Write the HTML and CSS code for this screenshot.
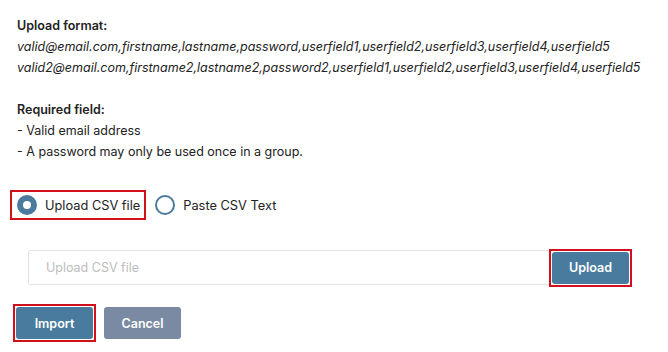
FILE: index.html
```html
<!DOCTYPE html>
<html lang="en">
<head>
    <meta charset="UTF-8">
    <meta name="viewport" content="width=device-width, initial-scale=1.0">
    <title>Import users</title>
    <link rel="stylesheet" href="styles.css">
</head>
<body>
<div class="import-form">
    <div class="help">
        <p><strong>Upload format:</strong></p>
        <p class="sample">valid@email.com,firstname,lastname,password,userfield1,userfield2,userfield3,userfield4,userfield5</p>
        <p class="sample">valid2@email.com,firstname2,lastname2,password2,userfield1,userfield2,userfield3,userfield4,userfield5</p>
        <p class="spacer">&nbsp;</p>
        <p><strong>Required field:</strong></p>
        <p>- Valid email address</p>
        <p>- A password may only be used once in a group.</p>
    </div>

    <div class="mode-row">
        <label class="radio marked">
            <span class="dot checked"></span>
            <span>Upload CSV file</span>
        </label>
        <label class="radio">
            <span class="dot"></span>
            <span>Paste CSV Text</span>
        </label>
    </div>

    <div class="upload-row">
        <input type="text" class="file-input" placeholder="Upload CSV file">
        <span class="marked-btn"><button class="btn">Upload</button></span>
    </div>

    <div class="actions">
        <span class="marked-btn"><button class="btn">Import</button></span>
        <button class="btn btn-cancel">Cancel</button>
    </div>
</div>
</body>
</html>
```

FILE: styles.css
```css
body {
    font-family: Inter, "Open Sans", sans-serif;
    font-size: 12.5px;
    color: #222;
    margin: 0;
    background: white;
}
.import-form {
    padding: 15px 17px;
}
.help p {
    margin: 0;
    line-height: 21px;
}
.help strong {
    font-weight: 600;
}
.sample {
    font-style: italic;
    white-space: nowrap;
}
.mode-row {
    display: flex;
    align-items: center;
    margin: 30px 0 0 -5px;
}
.radio {
    display: flex;
    align-items: center;
    gap: 8px;
    height: 26px;
    padding: 0 4px 0 5px;
    margin-right: 6px;
    font-size: 12.8px;
}
.marked {
    outline: 2px solid #d0111b;
}
.dot {
    box-sizing: border-box;
    width: 20px;
    height: 20px;
    border-radius: 50%;
    border: 2px solid #4b7a9c;
}
.dot.checked {
    border: 6px solid #4b7a9c;
}
.upload-row {
    display: flex;
    align-items: center;
    margin: 32px 21px 0 11px;
}
.file-input {
    flex: 1;
    box-sizing: border-box;
    height: 35px;
    border: 1px solid #e4e4e4;
    border-radius: 2px;
    padding: 0 17px;
    font-family: inherit;
    font-size: 12.5px;
}
.file-input::placeholder {
    color: #bdbdbd;
}
.marked-btn {
    display: inline-flex;
    padding: 1px;
    outline: 2px solid #d0111b;
}
.btn {
    height: 32px;
    min-width: 77px;
    padding: 0 14px;
    border: none;
    border-radius: 3px;
    background: #497b9f;
    color: white;
    font-family: inherit;
    font-weight: 600;
    font-size: 12.5px;
}
.actions {
    display: flex;
    align-items: center;
    gap: 10px;
    margin: 21px 0 0 -2px;
}
.btn-cancel {
    background: #7a8aa2;
}
```
